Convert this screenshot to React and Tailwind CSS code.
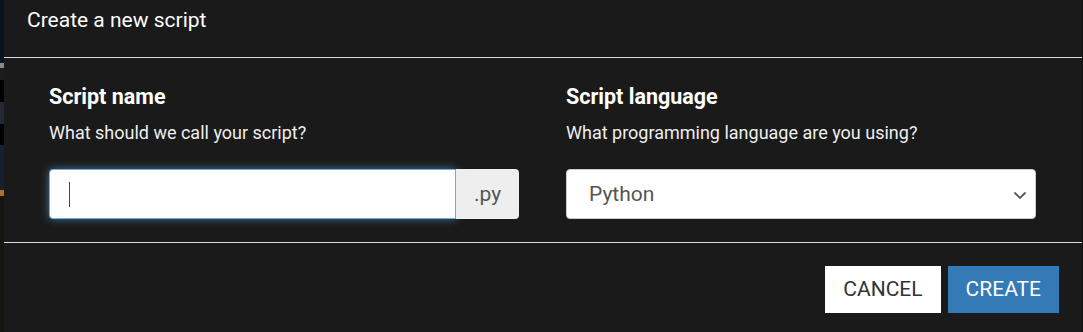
import React from 'react';

const font = { fontFamily: 'Roboto, "Liberation Sans", sans-serif' };

function Chevron() {
  return (
    <svg width="14" height="9" viewBox="0 0 14 9" fill="none" className="text-[#555]">
      <path d="M1.5 1.5 L7 7 L12.5 1.5" stroke="currentColor" strokeWidth="1.8" />
    </svg>
  );
}

function Field({ label, hint, children }) {
  return (
    <div className="flex flex-col">
      <div className="text-[21.5px] leading-[26px] font-bold text-white">{label}</div>
      <div className="mt-[12px] text-[18px] leading-[22px] text-[#eee]">{hint}</div>
      <div className="mt-[25px]">{children}</div>
    </div>
  );
}

export default function App() {
  return (
    <div className="w-[1083px] h-[332px] flex overflow-hidden bg-[#161616]" style={font}>
      {/* page behind the modal */}
      <div className="w-[4px] flex flex-col shrink-0">
        <div className="h-[63px] bg-[#0a1420]" />
        <div className="h-[5px] bg-[#8a8a8a]" />
        <div className="h-[12px] bg-[#1c1c1c]" />
        <div className="h-[22px] bg-black" />
        <div className="h-[22px] bg-[#222a38]" />
        <div className="h-[21px] bg-black" />
        <div className="h-[45px] bg-[#152030]" />
        <div className="h-[6px] bg-[#b07020]" />
        <div className="flex-1 bg-[#161512]" />
      </div>

      <div className="flex-1 flex flex-col bg-[#1a1a1a]">
        <div className="h-[58px] pt-[7px] px-[23px] border-b border-[#dcdcdc]">
          <h4 className="text-[21px] leading-[26px] text-white">Create a new script</h4>
        </div>

        <div className="h-[185px] pt-[26px] pl-[45px] pr-[46px] grid grid-cols-2 gap-x-[47px] border-b border-[#dcdcdc]">
          <Field label="Script name" hint="What should we call your script?">
            <div className="flex h-[50px]">
              <div className="flex-1 flex items-center pl-[19px] bg-white rounded-l-[4px] border border-[#66afe9] shadow-[0_0_8px_rgba(102,175,233,0.6)]">
                <span className="w-[1px] h-[25px] bg-[#444]" />
              </div>
              <span className="w-[63px] pt-[2px] flex items-center justify-center bg-[#eee] rounded-r-[4px] text-[21px] text-[#555]">.py</span>
            </div>
          </Field>
          <Field label="Script language" hint="What programming language are you using?">
            <div className="h-[50px] pt-[2px] flex items-center justify-between pl-[22px] pr-[8px] bg-white rounded-[4px] border border-[#ccc]">
              <span className="text-[21px] text-[#555]">Python</span>
              <Chevron />
            </div>
          </Field>
        </div>

        <div className="flex justify-end gap-[7px] pt-[23px] pr-[23px]">
          <button className="h-[47px] px-[18px] bg-white text-[#333] text-[21px]">CANCEL</button>
          <button className="h-[47px] px-[18px] bg-[#337ab7] text-white text-[21px]">CREATE</button>
        </div>
      </div>

      <div className="w-[1px] bg-[#111]" />
    </div>
  );
}
